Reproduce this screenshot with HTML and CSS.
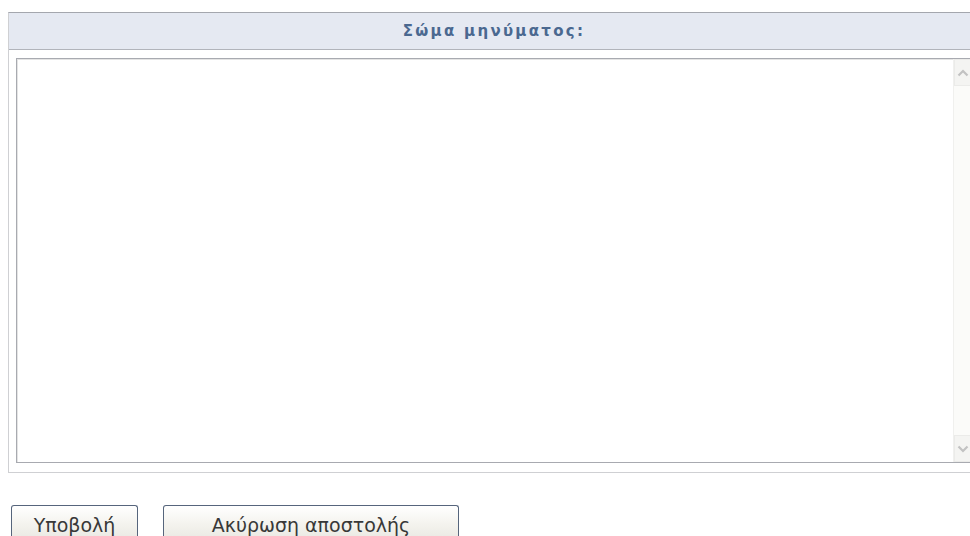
FILE: index.html
```html
<!DOCTYPE html>
<html lang="el">
<head>
<meta charset="utf-8">
<title>Σώμα μηνύματος</title>
<link rel="stylesheet" href="styles.css">
</head>
<body>
<div class="page">
  <div class="panel">
    <div class="panel-head">Σώμα μηνύματος:</div>
    <div class="panel-body">
      <div class="editor">
        <div class="editor-text"></div>
        <div class="scrollbar">
          <div class="sb-btn">
            <svg width="12" height="8" viewBox="0 0 12 8"><path d="M1.5 6.5 L6 2 L10.5 6.5" fill="none" stroke="#c2c2c2" stroke-width="2.2"/></svg>
          </div>
          <div class="sb-track"></div>
          <div class="sb-btn">
            <svg width="12" height="8" viewBox="0 0 12 8"><path d="M1.5 1.5 L6 6 L10.5 1.5" fill="none" stroke="#c2c2c2" stroke-width="2.2"/></svg>
          </div>
        </div>
      </div>
    </div>
  </div>
  <div class="actions">
    <button class="btn btn-submit" type="button">Υποβολή</button>
    <button class="btn btn-cancel" type="button">Ακύρωση αποστολής</button>
  </div>
</div>
</body>
</html>
```
FILE: styles.css
```css
html, body {
  margin: 0;
  padding: 0;
  background: #ffffff;
  overflow: hidden;
}

.page {
  padding: 12px 0 0 8px;
  width: 972px;
}

.panel {
  width: 972px;
  box-sizing: border-box;
  border: 1px solid #cfd0d3;
  border-top-color: #a4a7ae;
}

.panel-head {
  height: 36px;
  background: #e5e9f2;
  border-bottom: 1px solid #b1b4bb;
  display: flex;
  align-items: center;
  justify-content: center;
  font-family: "DejaVu Sans", Verdana, sans-serif;
  font-weight: bold;
  font-size: 15px;
  letter-spacing: 2.3px;
  color: #4a6890;
}

.panel-body {
  padding: 8px 7px 9px 7px;
}

.editor {
  height: 405px;
  box-sizing: border-box;
  border: 1px solid #a8aab0;
  box-shadow: inset 1px 1px 0 #e4e4e4;
  display: flex;
  background: #fff;
}

.editor-text {
  flex: 1;
}

.scrollbar {
  width: 17px;
  display: flex;
  flex-direction: column;
  background: #fbfbf9;
  border-left: 1px solid #f0f0ee;
}

.sb-btn {
  height: 25px;
  display: flex;
  align-items: center;
  justify-content: center;
  background: #f4f4f2;
  border: 1px solid #ebebe9;
}

.sb-track {
  flex: 1;
}

.actions {
  display: flex;
  gap: 25px;
  padding: 32px 0 0 3px;
}

.btn {
  height: 31px;
  box-sizing: border-box;
  border: 1px solid #56657c;
  border-bottom: 0;
  border-radius: 3px 3px 0 0;
  background: linear-gradient(#ffffff, #f4f3ee 60%, #ecebe5);
  font-family: "DejaVu Sans", Tahoma, sans-serif;
  font-size: 19px;
  line-height: 22px;
  color: #383838;
  padding: 0;
  display: flex;
  align-items: flex-start;
  justify-content: center;
  padding-top: 8px;
}

.btn-submit {
  width: 127px;
}

.btn-cancel {
  width: 296px;
}
```
